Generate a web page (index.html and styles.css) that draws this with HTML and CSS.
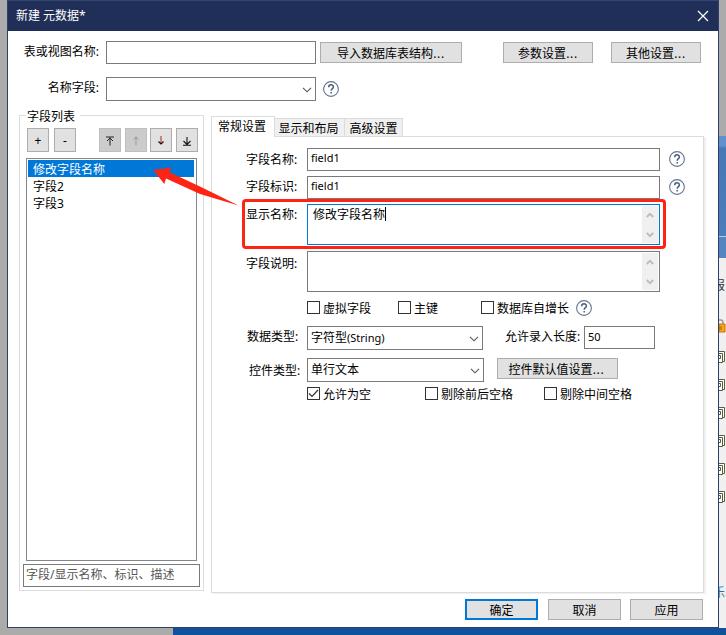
FILE: index.html
```
<!DOCTYPE html>
<html lang="zh-CN">
<head>
<meta charset="utf-8">
<title>新建 元数据</title>
<link rel="stylesheet" href="styles.css">
</head>
<body>
<svg class="defs" aria-hidden="true">
  <symbol id="help" viewBox="0 0 16 16"><circle cx="8" cy="8" r="7.4" fill="#fff" stroke="#66748f" stroke-width="1.1"/><path d="M5.700 6.200C5.700 3 10.400 3.100 10.400 5.900C10.400 7.600 8.200 7.700 8.200 9.700M8.200 11v1.600" fill="none" stroke="#4d5f80" stroke-width="1.500"/></symbol>
  <symbol id="chev" viewBox="0 0 10 6"><path d="M1 .8l4 4 4-4" fill="none" stroke="#555" stroke-width="1.100"/></symbol>
  <symbol id="up" viewBox="0 0 8 6"><path d="M.8 5L4 1.800 7.200 5" fill="none" stroke="#bdbdbd" stroke-width="2"/></symbol>
  <symbol id="down" viewBox="0 0 8 6"><path d="M.8 1L4 4.200 7.200 1" fill="none" stroke="#bdbdbd" stroke-width="2"/></symbol>
  <symbol id="pages" viewBox="0 0 12 14"><path d="M3.500 1.500h6v10h-6z" fill="#fffef0" stroke="#5c5d45"/><path d="M-2 3.500h9.500v9H-2z" fill="#fffff4" stroke="#5c5d45"/><path d="M1 5.500h4.500v3H3" fill="none" stroke="#5c5d45"/></symbol>
</svg>
<div class="backdrop">
  <div class="side">
    <div class="side-banner"></div>
    <div class="side-body">
      <span class="side-text">报</span>
      <svg class="lock" width="7" height="15" viewBox="0 0 7 15"><path d="M0 2h2q2 0 2 3v2" fill="none" stroke="#999" stroke-width="1.500"/><path d="M0 6h6v8H0z" fill="#fba512" stroke="#c87505"/><path d="M0 9h3M0 11h3" stroke="#a86105"/></svg>
      <svg class="page"><use href="#pages"/></svg>
      <svg class="page"><use href="#pages"/></svg>
      <svg class="page"><use href="#pages"/></svg>
      <svg class="page"><use href="#pages"/></svg>
      <svg class="page"><use href="#pages"/></svg>
      <svg class="page"><use href="#pages"/></svg>
      <span class="side-link">乐</span>
    </div>
  </div>
  <div class="taskbar"></div>
</div>
<div class="dialog">
  <header class="titlebar"><span>新建 元数据*</span>
    <svg width="12" height="12" viewBox="0 0 12 12"><path d="M1 1l10 10M11 1L1 11" stroke="#fff" stroke-width="1.300"/></svg>
  </header>
  <div class="top-row">
    <span class="top-label">表或视图名称:</span><div class="box top-input"></div>
    <div class="btn import">导入数据库表结构<span class="dots">...</span></div><div class="btn params">参数设置<span class="dots">...</span></div><div class="btn others">其他设置<span class="dots">...</span></div>
  </div>
  <div class="top-row second">
    <span class="top-label">名称字段:</span><div class="box select top-select"><svg class="chev"><use href="#chev"/></svg></div>
    <svg class="help top-help"><use href="#help"/></svg>
  </div>
  <main class="main">
    <section class="fields">
      <h2 class="legend">字段列表</h2>
      <div class="tools">
        <div class="tool">+</div><div class="tool minus">-</div>
        <div class="tool off first"><svg width="10" height="10" viewBox="0 0 10 10"><path d="M1 1h8M5 1.500v8M2 5l3-3 3 3" fill="none" stroke="#222"/></svg></div>
        <div class="tool off t2"><svg width="8" height="11" viewBox="0 0 8 11"><path d="M4 1.500v9M1.500 4.500L4 2l2.500 2.500" fill="none" stroke="#999"/></svg></div>
        <div class="tool t3"><svg width="8" height="11" viewBox="0 0 8 11"><path d="M4 1v8" fill="none" stroke="#b22"/><path d="M1.500 6.500L4 9l2.500-2.500" fill="none" stroke="#111" stroke-width="1.200"/></svg></div>
        <div class="tool t4"><svg width="10" height="10" viewBox="0 0 10 10"><path d="M1 9.200h8M5 1v7.500M1.500 5L5 8.500 8.500 5" fill="none" stroke="#111" stroke-width="1.100"/></svg></div>
      </div>
      <div class="list"><div class="item selected">修改字段名称</div><div class="item">字段2</div><div class="item">字段3</div></div>
      <div class="box search">字段/显示名称、标识、描述</div>
    </section>
    <section class="settings">
      <div class="tabs"><div class="tab active">常规设置</div><div class="tab">显示和布局</div><div class="tab last">高级设置</div></div>
      <div class="panel">
        <div class="row r1"><span class="label">字段名称:</span><div class="box wide">field1</div><svg class="help"><use href="#help"/></svg></div>
        <div class="row r2"><span class="label">字段标识:</span><div class="box wide">field1</div><svg class="help"><use href="#help"/></svg></div>
        <div class="row r3"><span class="label">显示名称:</span><div class="box wide area focus"><span class="typed">修改字段名称</span><div class="scroll"><svg><use href="#up"/></svg><svg><use href="#down"/></svg></div></div></div>
        <div class="row r4"><span class="label">字段说明:</span><div class="box wide area"><span></span><div class="scroll"><svg><use href="#up"/></svg><svg><use href="#down"/></svg></div></div></div>
        <div class="row checks r5"><div class="check c1"><i></i>虚拟字段</div><div class="check c2"><i></i>主键</div><div class="check"><i></i>数据库自增长</div><svg class="help"><use href="#help"/></svg></div>
        <div class="row r6"><span class="label">数据类型:</span><div class="box select type"><span>字符型<span class="latin">(String)</span></span><svg class="chev"><use href="#chev"/></svg></div><span class="len-label">允许录入长度:</span><div class="box len">50</div></div>
        <div class="row r7"><span class="label">控件类型:</span><div class="box select control">单行文本<svg class="chev"><use href="#chev"/></svg></div><div class="btn defaults">控件默认值设置<span class="dots">...</span></div></div>
        <div class="row checks r8"><div class="check d1"><i><svg width="11" height="11" viewBox="0 0 11 11"><path d="M1 5.500l3 3L10 2" fill="none" stroke="#333" stroke-width="1.200"/></svg></i>允许为空</div><div class="check d2"><i></i>剔除前后空格</div><div class="check"><i></i>剔除中间空格</div></div>
      </div>
    </section>
  </main>
  <footer class="footer"><div class="btn primary">确定</div><div class="btn cancel">取消</div><div class="btn">应用</div></footer>
</div>
<div class="highlight"></div>
<svg class="arrow" width="90" height="44" viewBox="150 164 90 44"><path d="M153.300 170L171.500 167.500 169 172 201 187 238.500 205.500 200 194 166 178.500 164.300 184z" fill="#ff2314"/></svg>
</body>
</html>
```
FILE: styles.css
```
* { box-sizing: border-box; }
body { margin: 0; width: 726px; height: 635px; overflow: hidden; position: relative; font: 12px/16px "Noto Sans", "Noto Sans CJK SC", sans-serif; color: #000; white-space: nowrap; }
svg { display: block; flex: none; }
.defs { position: absolute; width: 0; height: 0; }
.backdrop { height: 635px; background: #ababab; display: flex; flex-direction: column; }
.side { width: 7px; height: 628px; margin-left: 719px; padding-top: 136px; overflow: hidden; }
.side-banner { height: 122px; background: linear-gradient(#5f91cf 0, #5f91cf 10px, #4678b5 12px, #4a7dba 100px, #b5cbe5 100px, #b5cbe5 101px, #5585c0 101px); }
.side-body { height: 370px; background: #f0f0f0; }
.side-text, .side-link { display: block; height: 16px; padding-top: 20px; margin-left: -6px; }
.side-text { height: 60px; color: #333; }
.lock { display: block; margin-bottom: 17px; }
.page { width: 12px; height: 14px; margin: 0 0 14px -4px; }
.side-link { padding-top: 67px; color: #1876a8; }
.taskbar { height: 7px; margin-left: 173px; background: #11519a; }
.dialog { position: absolute; left: 7px; top: 0; width: 712px; height: 628px; background: #fff; border: 1px solid #303f6b; border-top: 0; display: flex; flex-direction: column; }
.titlebar { height: 31px; flex: none; background: #202f57; border-top: 1px solid #34466f; color: #fff; display: flex; justify-content: space-between; align-items: center; padding: 0 9px 0 8px; }
.top-row { height: 23px; margin-top: 10px; display: flex; align-items: center; }
.second { height: 24px; margin-top: 13px; }
.top-label { width: 98px; padding-right: 7px; text-align: right; margin-top: -1px; }
.second .top-label { margin-top: -2px; }
.box { border: 1px solid #7a7a7a; background: #fff; padding: 0 4px; flex: none; }
.top-input { width: 210px; height: 23px; }
.select { display: flex; align-items: center; justify-content: space-between; height: 24px; padding: 0 3px; }
.top-select { width: 210px; }
.chev { width: 10px; height: 6px; margin: 1px 0 0 auto; }
.latin { font-size: 11px; }
.btn { height: 21px; border: 1px solid #adadad; background: #e1e1e1; display: flex; align-items: center; justify-content: center; flex: none; padding-top: 2px; }
.dots { letter-spacing: 0.7px; }
.import { width: 142px; margin-left: 4px; }
.params { width: 90px; margin-left: 41px; }
.others { width: 90px; margin-left: 18px; }
.help { width: 16px; height: 16px; }
.top-help { margin: -1px 0 0 7px; }
.main { display: flex; height: 478px; margin-top: 14px; padding-left: 11px; }
.fields { width: 185px; height: 476px; border: 1px solid #dcdcdc; padding: 0 3px; }
.legend { width: 54px; height: 16px; margin: -7px 0 0 3px; padding: 0 1px; background: #fff; font: inherit; }
.tools { display: flex; margin: 3px 0 6px 4px; }
.tool { width: 22px; height: 24px; border: 1px solid #adadad; background: #e1e1e1; display: flex; align-items: center; justify-content: center; padding-top: 1px; }
.minus { margin-left: 5px; }
.first { margin-left: 23px; }
.t2, .t4 { margin-left: 4px; }
.t3 { margin-left: 3px; }
.off { background: #ccc; border-color: #bfbfbf; }
.list { width: 171px; height: 403px; margin-left: 3px; border: 1px solid #828790; padding: 1px 2px 0 1px; }
.item { height: 17px; padding-left: 5px; line-height: 19px; }
.selected { background: #0078d7; color: #fff; }
.search { width: 177px; height: 23px; margin-top: 3px; padding: 0 2px; line-height: 20px; color: #555; }
.settings { margin-left: 7px; width: 495px; padding-top: 1px; }
.tabs { display: flex; align-items: flex-end; height: 21px; }
.tab { height: 19px; width: 70px; padding-right: 2px; border: 1px solid #dcdcdc; border-left: 0; background: #f0f0f0; line-height: 19px; text-align: center; }
.active { width: 64px; height: 21px; border-left: 1px solid #dcdcdc; border-bottom: 0; background: #fff; line-height: 20px; position: relative; }
.last { width: 58px; padding-right: 0; }
.panel { width: 493px; height: 457px; margin-top: -1px; border: 1px solid #dcdcdc; box-shadow: 2px 1px 0 #f0f0f0; }
.row { display: flex; align-items: flex-start; }
.label { width: 95px; padding-left: 34px; flex: none; }
.r1 { height: 23px; margin-top: 11px; }
.r2 { height: 23px; margin-top: 5px; }
.r3 { height: 41px; margin-top: 5px; }
.r4 { height: 41px; margin-top: 6px; }
.r1 .label { margin-top: 4px; }
.r2 .label, .r3 .label { margin-top: 3px; }
.r4 .label { margin-top: 5px; }
.wide { width: 353px; height: 23px; font-size: 11px; line-height: 18px; padding-left: 3px; }
.row > .help { margin: 3px 0 0 9px; }
.area { height: 41px; display: flex; justify-content: space-between; padding: 1px; font-size: 12px; }
.focus { border-color: #0078d7; }
.typed { height: 14px; margin: 1px 0 0 4px; border-right: 1px solid #000; line-height: 16px; }
.scroll { width: 16px; background: #f0f0f0; display: flex; flex-direction: column; justify-content: space-between; align-items: center; padding: 6px 0 5px; }
.scroll svg { width: 8px; height: 6px; }
.checks { height: 13px; align-items: center; padding-left: 95px; }
.r5 { margin-top: 9px; }
.check { display: flex; align-items: flex-start; gap: 3px; height: 13px; line-height: 15px; }
.check i { width: 13px; height: 13px; border: 1px solid #333; }
.c1 { width: 91px; }
.c2 { width: 83px; }
.checks > .help { margin: 0 0 0 7px; }
.r6 { height: 24px; margin-top: 12px; }
.r7 { height: 24px; margin-top: 8px; }
.r6 .label { margin-top: 3px; padding-left: 35px; }
.r7 .label { margin-top: 5px; padding-left: 37px; }
.type { width: 176px; }
.control { width: 177px; }
.len-label { width: 101px; padding-left: 22px; margin-top: 3px; }
.len { width: 71px; height: 23px; padding-left: 3px; font-size: 11px; line-height: 19px; }
.defaults { width: 121px; margin-left: 13px; padding-right: 2px; }
.r8 { margin-top: 5px; }
.d1 { width: 118px; }
.d2 { width: 119px; }
.footer { display: flex; gap: 9px; justify-content: flex-end; margin-top: 6px; padding-right: 15px; }
.footer .btn { width: 73px; }
.footer .cancel { margin-left: 1px; }
.footer .primary { border: 2px solid #0078d7; }
.highlight { position: absolute; left: 242px; top: 199px; width: 424px; height: 50px; border: 3px solid #ff2314; border-radius: 4px; }
.arrow { position: absolute; left: 150px; top: 164px; }
```
